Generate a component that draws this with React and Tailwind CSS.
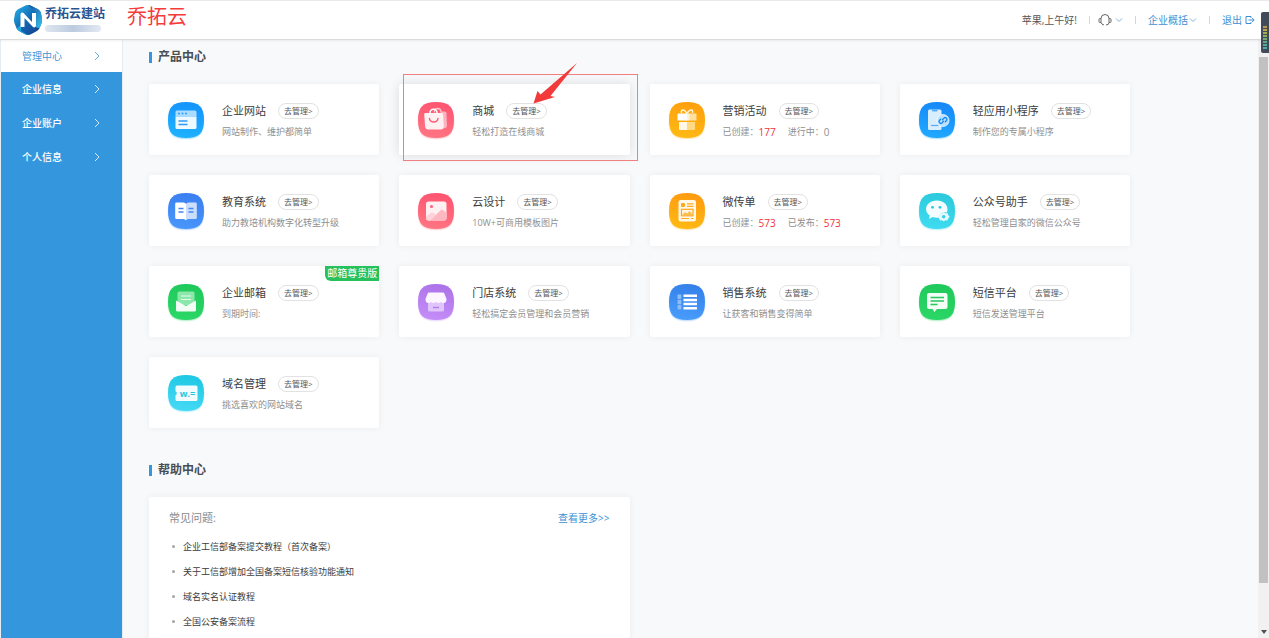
import React from "react";

const SQUIRCLE = "M18 0C31 0 36 5 36 18S31 36 18 36 0 31 0 18 5 0 18 0Z";

function Tile({ id, from, to, children }) {
  return (
    <svg viewBox="0 0 36 36" className="size-9 shrink-0 overflow-visible" aria-hidden="true">
      <defs>
        <linearGradient id={id} x1="0.6" y1="0" x2="0.4" y2="1">
          <stop offset="0" stopColor={from} />
          <stop offset="1" stopColor={to} />
        </linearGradient>
      </defs>
      <path d={SQUIRCLE} transform="translate(0 1)" fill={to} opacity="0.3" stroke={to} strokeOpacity="0.3" strokeWidth="1.5" />
      <path d={SQUIRCLE} fill={`url(#${id})`} />
      {children}
    </svg>
  );
}

const icons = {
  site: (
    <Tile id="site" from="#1593fb" to="#1fb2ff">
      <path d="M9 8.5h18a1.5 1.5 0 0 1 1.500 1.500v4.500h-21v-4.500a1.500 1.500 0 0 1 1.500-1.500z" fill="#a9dcff" />
      <path d="M7.500 14.500h21v11a1.500 1.500 0 0 1-1.500 1.500h-18a1.500 1.500 0 0 1-1.500-1.500z" fill="#eef8ff" />
      <g fill="#2496f5"><circle cx="11" cy="11.500" r="0.900" /><circle cx="14.500" cy="11.500" r="0.900" /><circle cx="18" cy="11.500" r="0.900" /></g>
      <path d="M10.500 19h9M10.500 22.500h9" stroke="#2d9cf7" strokeWidth="1.300" />
    </Tile>
  ),
  mall: (
    <Tile id="mall" from="#ff5470" to="#ff7583">
      <path d="M23 9.500h3.500q1.800 0 2 1.800l.5 12q0 3-3 3h-4z" fill="#ffb3bf" />
      <path d="M16.500 10.500v-.800a3.200 3.200 0 0 1 6.400 0v.800" fill="none" stroke="#ffc3cc" strokeWidth="1.300" />
      <path d="M7.500 11h16q1.400 0 1.500 1.300l.8 12q0 3.200-3 3.200H10.300q-3 0-3.200-3L6.200 12.300q0-1.300 1.300-1.300z" fill="#fff0f2" />
      <path d="M12 12v-1.200a3.500 3.500 0 0 1 7 0V12" fill="none" stroke="#fff" strokeWidth="1.500" />
      <path d="M11.500 16.500a4.200 3.500 0 0 0 8.400 0" fill="none" stroke="#fb5c75" strokeWidth="1.500" strokeLinecap="round" />
    </Tile>
  ),
  gift: (
    <Tile id="gift" from="#ff9f0d" to="#ffb914">
      <path d="M18 11.500c-3-5-6.500-4-5.500-.5M18 11.500c3-5 6.500-4 5.500-.5" fill="none" stroke="#fff4dc" strokeWidth="1.400" />
      <path d="M9.500 11.500H18v7H8.500v-6q0-1 1-1z" fill="#fff" />
      <path d="M18 11.500h8.500q1 0 1 1v6H18z" fill="#ffe0a0" />
      <path d="M10 20h8v8h-7q-1 0-1-1z" fill="#fff8e9" />
      <path d="M18 20h8v7q0 1-1 1h-7z" fill="#ffd983" />
      <path d="M15.500 11.500h5v7h-5z" fill="#fff" opacity=".55" />
    </Tile>
  ),
  app: (
    <Tile id="app" from="#1687f8" to="#1fa9ff">
      <rect x="9" y="7.500" width="13.500" height="20.500" rx="1.500" fill="#d8eeff" />
      <path d="M13 7.500h5.500v1.200q0 .8-.8.800h-3.900q-.8 0-.8-.8z" fill="#55adf9" />
      <path d="M12 23.500h7.500" stroke="#55adf9" strokeWidth="1.200" />
      <circle cx="24" cy="18.500" r="6" fill="#b9e0ff" stroke="#fff" strokeWidth=".700" />
      <g fill="none" stroke="#1b8af5" strokeWidth="1.400" strokeLinecap="round" transform="translate(-.8 -.5)">
        <path d="M24.300 18.200l1.600-1.600a1.700 1.700 0 0 1 2.400 2.400l-1.200 1.200" />
        <path d="M25.300 19.800l-1.600 1.600a1.700 1.700 0 0 1-2.400-2.400l1.200-1.200" />
      </g>
    </Tile>
  ),
  edu: (
    <Tile id="edu" from="#3b7ff0" to="#4896fb">
      <path d="M8.500 9.500h7q2 0 2.500 1.500v16.500q-.8-1.500-2.500-1.500h-7q-1.300 0-1.300-1.300V10.800q0-1.300 1.300-1.300z" fill="#fff" />
      <path d="M27.500 9.500h-7q-2 0-2.500 1.500v16.500q.8-1.500 2.500-1.500h7q1.300 0 1.300-1.300V10.800q0-1.300-1.300-1.300z" fill="#cbdffc" />
      <path d="M10.500 15.500h5M10.500 19h5M20.500 15.500h5M20.500 19h5" stroke="#4288f2" strokeWidth="1.300" />
    </Tile>
  ),
  design: (
    <Tile id="design" from="#ff5470" to="#ff7583">
      <rect x="8" y="8.500" width="20.500" height="19" rx="2.500" fill="#fff0f2" />
      <circle cx="13.500" cy="13.500" r="1.600" fill="#fb6680" />
      <path d="M8 24l5-4q1.200-.8 2.300.2l2.200 1.800 5.500-5q1-.8 2 0l3.500 3v5q0 2.500-2.500 2.500H10.500Q8 27.500 8 25z" fill="#ffb7c1" />
      <path d="M8 24l5-4q1.200-.8 2.300.2l2.500 2.300-5.500 5H10.500Q8 27.500 8 25z" fill="#ffd3d9" />
    </Tile>
  ),
  flyer: (
    <Tile id="flyer" from="#ff9a10" to="#ffb914">
      <rect x="9.500" y="7" width="17.500" height="21.500" rx="2.200" fill="#fff7e8" />
      <rect x="12" y="10" width="4" height="4" rx="1" fill="#ffa91c" />
      <path d="M18 10.800h6.500M18 13.400h6.500M12 25.500h8M22 25.500h2.500" stroke="#ffa91c" strokeWidth="1.200" />
      <rect x="12.500" y="16.300" width="11.500" height="6.500" fill="none" stroke="#ffa91c" strokeWidth="1.200" />
      <path d="M13 22l3.200-3 2 1.500 2.200-2.500 3 3v1.500H13z" fill="#ffbd4d" />
    </Tile>
  ),
  wechat: (
    <Tile id="wechat" from="#2cc9dc" to="#3fdbf0">
      <path d="M17.800 7.500c6.200 0 10.700 3.800 10.700 8.700 0 1.200-.3 2.300-.8 3.300-4.700-1-7.200 1.500-7 5-3 .6-5 .3-7-.5l-3.700 2 .8-3.600C8.500 20.800 7 18.700 7 16.200c0-4.900 4.600-8.700 10.800-8.700z" fill="#f3fdff" />
      <circle cx="13.500" cy="14.300" r="1.400" fill="#2cc6da" />
      <circle cx="21" cy="14.300" r="1.400" fill="#2cc6da" />
      <path d="M24.700 18.800l1.600 1.400 2.100-.2.800 1.900 1.500 1.800-1.500 1.700-.8 2-2.100-.2-1.600 1.400-1.600-1.400-2.100.2-.8-2-1.500-1.700 1.500-1.800.8-1.900 2.100.2z" fill="#e2faff" />
      <circle cx="24.700" cy="23.700" r="1.700" fill="#35d0e4" />
    </Tile>
  ),
  mail: (
    <Tile id="mail" from="#1fc85a" to="#2bd766">
      <path d="M11 7.500h14q1.500 0 1.500 1.500v12h-17V9q0-1.500 1.500-1.500z" fill="#8be8aa" />
      <path d="M13 12h10M13 15.500h10" stroke="#e6fbed" strokeWidth="1.200" />
      <path d="M8 16.500l9 5q1 .5 2 0l9-5v9.500q0 1.500-1.500 1.500h-17Q8 27.500 8 26z" fill="#f1fdf5" />
    </Tile>
  ),
  store: (
    <Tile id="store" from="#ac73e8" to="#c48df8">
      <path d="M10 17h16v9q0 1.500-1.500 1.500h-13Q10 27.500 10 26z" fill="#dfc5fa" />
      <path d="M11.500 8.500h13q1.500 0 2 1.300l2 5.200q0 4-2.800 4-2 0-2.600-1.300-.8 1.300-2.600 1.300-1.700 0-2.500-1.300-.8 1.300-2.500 1.300-1.800 0-2.600-1.300Q12.300 19 10.300 19q-2.800 0-2.800-4l2-5.200q.5-1.300 2-1.300z" fill="#fbf6ff" />
      <path d="M15 23.500h6" stroke="#b57bed" strokeWidth="1.400" />
    </Tile>
  ),
  sales: (
    <Tile id="sales" from="#3480ea" to="#489cfb">
      <g fill="#8dbcf7">
        <rect x="8.500" y="10.500" width="3.800" height="4.500" rx=".8" /><rect x="8.500" y="15.800" width="3.800" height="4.500" rx=".8" /><rect x="8.500" y="21.100" width="3.800" height="4.500" rx=".8" />
      </g>
      <path d="M14.500 11.700h13.500M14.500 15.900h13.500M14.500 20.100h13.500M14.500 24.300h13.500" stroke="#fff" strokeWidth="2.500" />
    </Tile>
  ),
  sms: (
    <Tile id="sms" from="#1fc85a" to="#2bd766">
      <path d="M10 9h16.500q2 0 2 2v12q0 2-2 2h-8.500L15.500 28l-2-3H10q-2 0-2-2V11q0-2 2-2z" fill="#f1fdf5" />
      <path d="M11.500 13.500h13.500M11.500 17h13.500M11.500 20.500h7" stroke="#27c65f" strokeWidth="1.300" />
    </Tile>
  ),
  domain: (
    <Tile id="domain" from="#1fc8e3" to="#45d9f5">
      <path d="M9 10.500h19q1.500 0 1.500 1.500v12.500q0 1.500-1.500 1.500H9q-1.500 0-1.500-1.500v-4.300a2.200 2.200 0 0 0 0-4V12q0-1.500 1.500-1.500z" fill="#f1fcff" />
      <text x="19.500" y="22" textAnchor="middle" fontFamily="Open Sans, sans-serif" fontWeight="700" fontSize="9" fill="#25c5de">w.=</text>
    </Tile>
  ),
};

const products = [
  { icon: "site", name: "企业网站", desc: "网站制作、维护都简单" },
  { icon: "mall", name: "商城", desc: "轻松打造在线商城", marked: true },
  { icon: "gift", name: "营销活动", stats: [["已创建：", "177", true], ["进行中：", "0", false]] },
  { icon: "app", name: "轻应用小程序", desc: "制作您的专属小程序" },
  { icon: "edu", name: "教育系统", desc: "助力教培机构数字化转型升级" },
  { icon: "design", name: "云设计", desc: "10W+可商用模板图片" },
  { icon: "flyer", name: "微传单", stats: [["已创建：", "573", true], ["已发布：", "573", true]] },
  { icon: "wechat", name: "公众号助手", desc: "轻松管理自家的微信公众号" },
  { icon: "mail", name: "企业邮箱", desc: "到期时间:", badge: "邮箱尊贵版" },
  { icon: "store", name: "门店系统", desc: "轻松搞定会员管理和会员营销" },
  { icon: "sales", name: "销售系统", desc: "让获客和销售变得简单" },
  { icon: "sms", name: "短信平台", desc: "短信发送管理平台" },
  { icon: "domain", name: "域名管理", desc: "挑选喜欢的网站域名" },
];

const menu = ["管理中心", "企业信息", "企业账户", "个人信息"];

const faqs = [
  "企业工信部备案提交教程（首次备案）",
  "关于工信部增加全国备案短信核验功能通知",
  "域名实名认证教程",
  "全国公安备案流程",
];

function Chevron({ className }) {
  return (
    <svg viewBox="0 0 10 10" className={className} fill="none" stroke="currentColor" aria-hidden="true">
      <path d="M3 1l4 4-4 4" />
    </svg>
  );
}

function Down() {
  return (
    <svg viewBox="0 0 8 8" className="size-2" fill="none" stroke="#7fb3dc" aria-hidden="true">
      <path d="M1 2.500l3 3 3-3" />
    </svg>
  );
}

function Divider() {
  return <span className="h-2 w-px bg-[#d5d5d5]" />;
}

function Logo() {
  return (
    <svg viewBox="0 0 28 30" className="h-[30px] w-7" aria-hidden="true">
      <defs>
        <linearGradient id="logoA" x1="0" y1="0" x2="1" y2="1">
          <stop offset="0" stopColor="#25b7e8" /><stop offset=".5" stopColor="#1467b5" /><stop offset="1" stopColor="#123a86" />
        </linearGradient>
        <linearGradient id="logoB" x1="0" y1="0" x2="1" y2="1">
          <stop offset="0" stopColor="#174b9b" /><stop offset="1" stopColor="#35c6ef" />
        </linearGradient>
      </defs>
      <path d="M14 0q2 0 4 1.200l6 3q2.500 1.300 3 4l1 6q.2 2-.5 4l-2 5q-1 2-3 3l-5 2.800q-3.500 2-7 0l-5-2.800q-2-1-3-3l-2-5q-.7-2-.5-4l1-6q.5-2.700 3-4l6-3Q12 0 14 0z" fill="url(#logoA)" />
      <path d="M14 0q2 0 4 1.200l6 3q2.500 1.300 3 4l1 6q.2 2-.5 4l-2 5-3.500-1V8z" fill="url(#logoB)" />
      <path d="M2.500 23.500L7 20v6l7 4q-2 0-3.500-1l-5-2.700q-2-1-3-2.800z" fill="#1fa8df" />
      <path d="M6.500 22V9.500q0-2 1.800-2 .9 0 1.700.9l8 8.600V8h4v12.500q0 2-1.800 2-.9 0-1.700-.9l-8-8.600v9z" fill="#fff" />
    </svg>
  );
}

function Header() {
  return (
    <header className="relative z-10 flex h-10 shrink-0 items-center border-t border-b border-t-[#e9e9e9] border-b-[#d9dbdd] bg-white px-3.5 shadow-[0_1px_2px_rgba(0,0,0,0.06)]">
      <a href="#home" className="flex items-center gap-[3px]">
        <Logo />
        <span className="flex flex-col">
          <span className="text-[12px] leading-3 font-bold text-[#285493]">乔拓云建站</span>
          <span className="mt-[5px] h-[7px] w-14 rounded-full bg-linear-to-r from-[#dfe6f0] via-[#bccbe0] to-[#e3e9f2]" />
        </span>
      </a>
      <span className="mb-1.5 ml-[22px] text-[20px] leading-6 text-[#f53b3b]">乔拓云</span>
      <div className="ml-auto flex items-center gap-3 text-[10px] leading-4 text-[#3f8fd0]">
        <span className="text-[#555]">苹果,上午好!</span>
        <Divider />
        <button type="button" aria-label="客服" className="-ml-1 flex items-center gap-[3px]">
          <svg viewBox="0 0 14 14" className="size-3.5" fill="none" stroke="#666" strokeWidth="1" aria-hidden="true">
            <path d="M3 9.500V5.500a4 4 0 0 1 8 0v4M3 5.500H2q-1 0-1 1v2q0 1 1 1h1M11 5.500h1q1 0 1 1v2q0 1-1 1h-1q0 2.500-3 2.500" />
            <path d="M3 9.500q.5 2 3 2.500" />
          </svg>
          <Down />
        </button>
        <Divider />
        <button type="button" className="flex items-center gap-px">企业概括<Down /></button>
        <Divider />
        <a href="#logout" className="flex items-center gap-[3px]">
          退出
          <svg viewBox="0 0 10 10" className="size-2.5" fill="none" stroke="currentColor" aria-hidden="true">
            <path d="M6 3V1.500H1v7h5V7M3.500 5H9M7.200 3L9.200 5l-2 2" />
          </svg>
        </a>
      </div>
    </header>
  );
}

function Sidebar() {
  return (
    <nav className="w-[123px] shrink-0 border-x border-[#e4edf4] bg-[#3497dd]">
      {menu.map((item, i) => (
        <a
          key={item}
          href={`#menu-${i}`}
          className={
            i === 0
              ? "flex h-8 items-center justify-between bg-white pr-5 pl-[21px] text-[10px] text-[#3f97d8]"
              : "flex h-[34px] items-center justify-between pr-5 pl-[21px] text-[10px] font-medium text-white"
          }
        >
          {item}
          <Chevron className="size-2.5 opacity-80" />
        </a>
      ))}
    </nav>
  );
}

function SectionTitle({ children }) {
  return (
    <h2 className="flex items-center gap-1.5 text-[12px] leading-4 font-bold text-[#4a4d52]">
      <span className="h-[11px] w-[3px] bg-[#3497dd]" />
      {children}
    </h2>
  );
}

function Highlight() {
  return (
    <>
      <span className="pointer-events-none absolute -top-2.5 -right-2 -bottom-1.5 left-1 border border-[#f07f7f]" />
      <svg viewBox="0 0 46 44" className="pointer-events-none absolute -top-[22px] left-[133px] h-11 w-[46px]" aria-hidden="true">
        <path d="M45 1L18.500 34l4.500 1L1.500 41.500 5.500 29l3 3.500z" fill="#f23a3a" />
      </svg>
    </>
  );
}

function ProductCard({ item }) {
  return (
    <article
      className={
        item.marked
          ? "relative flex h-[71px] items-start gap-[18px] rounded-xs bg-white pt-[18px] pl-[19px] shadow-[0_0_12px_rgba(0,0,0,0.12)]"
          : "relative flex h-[71px] items-start gap-[18px] rounded-xs bg-white pt-[18px] pl-[19px] shadow-[0_0_7px_rgba(0,0,0,0.06)]"
      }
    >
      {icons[item.icon]}
      <div className="whitespace-nowrap">
        <div className="flex items-center gap-3">
          <h3 className="text-[11px] leading-[18px] text-[#3c3c3c]">{item.name}</h3>
          <button type="button" className="h-4 rounded-full border border-[#e2e2e2] px-[5px] text-[8px] leading-[14px] text-[#555]">
            去管理&gt;
          </button>
        </div>
        <p className="mt-1 flex gap-3 text-[9px] leading-4 text-[#8f8f8f]">
          {item.desc}
          {item.stats?.map(([label, value, hot]) => (
            <span key={label} className="flex">
              {label}
              <span className={hot ? "text-[10px] text-[#f0323c]" : "text-[10px]"}>{value}</span>
            </span>
          ))}
        </p>
      </div>
      {item.badge && (
        <span className="absolute top-0 right-0 rounded-bl-md bg-[#26c15c] px-0.5 text-[10px] leading-[15px] text-white">{item.badge}</span>
      )}
      {item.marked && <Highlight />}
    </article>
  );
}

function Scrollbar() {
  return (
    <div className="flex w-[11px] shrink-0 flex-col items-center bg-[#f1f1f1]" aria-hidden="true">
      <span className="mt-[17px] w-[9px] flex-[526] bg-[#c1c1c1]" />
      <span className="flex-[47]" />
      <svg viewBox="0 0 6 4" className="mb-1 h-1 w-1.5"><path d="M0 0h6L3 4z" fill="#505050" /></svg>
    </div>
  );
}

function Meter() {
  return (
    <div className="absolute top-3 right-0 z-20 flex h-[41px] w-2 flex-col items-center justify-end gap-px rounded-l-xs bg-[#414b5a] pb-1" aria-hidden="true">
      <span className="h-0.5 w-1 bg-[#b79b4b]" />
      <span className="h-0.5 w-1 bg-[#b9a84e]" />
      <span className="h-0.5 w-1 bg-[#a9ad52]" />
      <span className="h-0.5 w-1 bg-[#8dae5c]" />
      <span className="h-0.5 w-1 bg-[#72ab70]" />
      <span className="h-0.5 w-1 bg-[#5fa985]" />
      <span className="h-0.5 w-1 bg-[#55a99a]" />
      <span className="h-0.5 w-1 bg-[#4fa9a9]" />
    </div>
  );
}

export default function App() {
  return (
    <div className="relative flex h-screen flex-col overflow-hidden bg-[#f7f9fb] font-['Open_Sans','Noto_Sans_CJK_SC',sans-serif]">
      <Header />
      <Meter />
      <div className="flex min-h-0 flex-1">
        <Sidebar />
        <main className="min-w-0 flex-1 overflow-y-auto pt-[9px] pl-[26px] [scrollbar-width:none]">
          <div className="max-w-[981px]">
            <SectionTitle>产品中心</SectionTitle>
            <section className="mt-[19px] grid grid-cols-4 gap-5">
              {products.map((p) => <ProductCard key={p.name} item={p} />)}
            </section>
            <div className="mt-[34px]">
              <SectionTitle>帮助中心</SectionTitle>
            </div>
            <div className="mt-[19px] grid grid-cols-2 gap-5">
              <section className="rounded-xs bg-white px-5 pt-3 pb-6 shadow-[0_0_7px_rgba(0,0,0,0.06)]">
                <div className="flex items-center justify-between">
                  <h3 className="text-[11px] leading-[18px] text-[#8a8a8a]">常见问题:</h3>
                  <a href="#more" className="text-[10px] leading-4 text-[#3b93d8]">查看更多&gt;&gt;</a>
                </div>
                <ul className="mt-[7px]">
                  {faqs.map((q) => (
                    <li key={q} className="flex h-[25px] items-center gap-2 pl-[3px] text-[9px] text-[#3c3c3c]">
                      <span className="size-[3px] rounded-full bg-[#a5a5a5]" />
                      <a href="#faq">{q}</a>
                    </li>
                  ))}
                </ul>
              </section>
            </div>
          </div>
        </main>
        <Scrollbar />
      </div>
    </div>
  );
}
